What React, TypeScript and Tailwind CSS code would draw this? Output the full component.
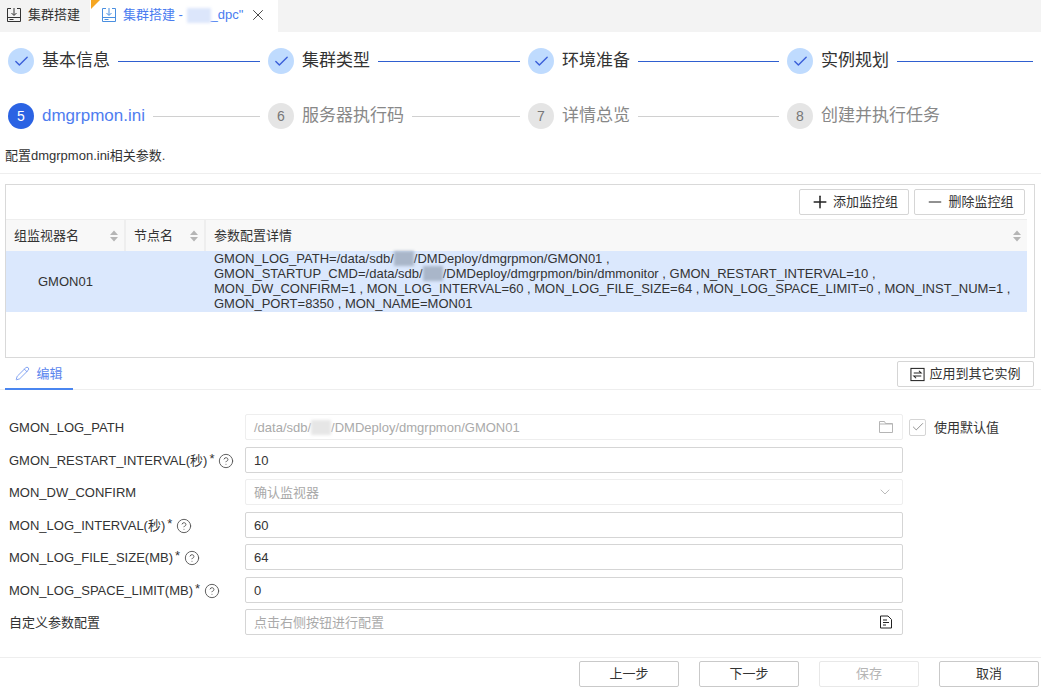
import React from "react";
import { Check, ChevronDown, Minus, Plus, X, Pencil, CircleHelp } from "lucide-react";

const topSteps = ["基本信息", "集群类型", "环境准备", "实例规划"];
const bottomSteps = ["服务器执行码", "详情总览", "创建并执行任务"];

const DownloadIcon = ({ className }: { className: string }) => (
  <svg viewBox="0 0 16 16" width="16" height="16" fill="none" stroke="currentColor" strokeWidth="1" className={className}>
    <path d="M5 1.5H1.5v13h13v-13H11" />
    <path d="M8 1v7M5.5 6 8 8.5 10.5 6" />
    <path d="M1.5 10.5h13M3.5 12.5h4" />
  </svg>
);

const Sorter = () => (
  <svg viewBox="0 0 8 12" width="8" height="12" className="text-[#b5b5b5] shrink-0">
    <path d="M4 0.5 8 5H0Z M4 11.5 0 7h8Z" fill="currentColor" />
  </svg>
);

const Hidden = ({ w, tone }: { w: string; tone: string }) => (
  <span className={`inline-block h-[15px] align-[-3px] blur-[1.5px] ${w} ${tone}`} />
);

const Help = () => <CircleHelp size={16} strokeWidth={1.4} className="text-[#555] shrink-0" />;

function FormRow({ label, star, children }: { label: string; star?: boolean; children: React.ReactNode }) {
  return (
    <div className="flex h-[26px] items-center">
      <div className="flex w-[245px] shrink-0 items-center pl-[9px] pt-[2px] text-[13px] text-[#333]">
        <span>{label}</span>
        {star && <span className="ml-[2px] mr-[4px] -mt-1">*</span>}
        {star && <Help />}
      </div>
      {children}
    </div>
  );
}

const boxClass = "flex h-[26px] w-[658px] shrink-0 items-center justify-between rounded-[2px] border pl-[8px] pr-[9px] pt-[2px] text-[13px]";

function ActionButton({ label, disabled }: { label: string; disabled?: boolean }) {
  return (
    <button
      className={`h-[26px] w-[100px] rounded-[2px] border text-[13px] ${
        disabled ? "border-[#e8e8e8] text-[#b5b5b5]" : "border-[#c9c9c9] text-[#333]"
      }`}
    >
      {label}
    </button>
  );
}

export default function App() {
  return (
    <div className="h-[692px] w-[1041px] overflow-hidden bg-white font-['Liberation_Sans','Noto_Sans_CJK_SC',sans-serif] text-[#333]">
      <div className="flex h-8 bg-[#f3f3f3] text-[13px]">
        <div className="flex w-[90px] items-center gap-[6px] pl-[6px] pb-[2px]">
          <DownloadIcon className="text-[#333]" />
          <span>集群搭建</span>
        </div>
        <div className="relative flex w-[188px] items-center bg-white pl-[11px] pb-[2px] text-[#4a7cf0]">
          <div className="absolute left-[1px] top-0 border-r-[9px] border-t-[9px] border-r-transparent border-t-[#f5a623]" />
          <DownloadIcon className="text-[#4a8fe0]" />
          <span className="ml-[6px] whitespace-pre">集群搭建 - </span>
          <Hidden w="w-[24px]" tone="bg-[#dce6fb]" />
          <span>_dpc"</span>
          <X size={18} strokeWidth={1.3} className="ml-[6px] text-[#444]" />
        </div>
      </div>

      <div className="grid h-[42px] grid-cols-[260px_260px_259px_246px] items-end pl-2">
        {topSteps.map((s, i) => (
          <div key={s} className="flex h-[26px] items-center">
            <div className="flex size-[26px] shrink-0 items-center justify-center rounded-full bg-[#bfdbfe]">
              <Check size={17} strokeWidth={2} className="text-[#3b5fd9]" />
            </div>
            <span className="ml-2 text-[17px] text-[#333]">{s}</span>
            <div className={`ml-2 h-px flex-1 bg-[#2f5fd0] ${i === 3 ? "" : "mr-2"}`} />
          </div>
        ))}
      </div>

      <div className="mt-[29px] grid h-[26px] grid-cols-[260px_260px_259px_246px] pl-2">
        <div className="flex items-center">
          <div className="flex size-[26px] shrink-0 items-center justify-center rounded-full bg-[#2b63e3] text-[14px] text-white">5</div>
          <span className="ml-2 text-[17px] text-[#4f7df0]">dmgrpmon.ini</span>
          <div className="ml-2 mr-2 h-px flex-1 bg-[#d0d0d0]" />
        </div>
        {bottomSteps.map((s, i) => (
          <div key={s} className="flex items-center">
            <div className="flex size-[26px] shrink-0 items-center justify-center rounded-full bg-[#e5e5e5] text-[14px] text-[#777]">{i + 6}</div>
            <span className="ml-2 text-[17px] text-[#888]">{s}</span>
            <div className={`ml-2 mr-2 h-px flex-1 ${i === 2 ? "" : "bg-[#d0d0d0]"}`} />
          </div>
        ))}
      </div>

      <div className="mt-[18px] h-[27px] border-b border-[#eeeeee] pl-[5px] text-[13px] leading-[17px] text-[#333]">配置dmgrpmon.ini相关参数.</div>

      <div className="ml-[5px] mt-[10px] h-[174px] w-[1030px] border border-[#d9d9d9]">
        <div className="flex h-[34px] items-center justify-end gap-[5px] pr-[9px]">
          <button className="flex h-[26px] w-[110px] items-center justify-center gap-[3px] rounded-[2px] border border-[#d5d5d5] text-[13px]">
            <Plus size={20} strokeWidth={1.8} className="text-[#222]" />
            添加监控组
          </button>
          <button className="flex h-[26px] w-[111px] items-center justify-center gap-[3px] rounded-[2px] border border-[#d5d5d5] text-[13px]">
            <Minus size={20} strokeWidth={1.2} className="text-[#222]" />
            删除监控组
          </button>
        </div>
        <div className="grid h-[32px] w-[1021px] grid-cols-[120px_80px_821px] border-t border-[#eeeeee] bg-[#f8f8f8] text-[13px]">
          <div className="flex items-center justify-between border-r-2 border-[#eeeeee] pl-[8px] pr-[6px]">组监视器名<Sorter /></div>
          <div className="flex items-center justify-between border-r-2 border-[#eeeeee] pl-[8px] pr-[6px]">节点名<Sorter /></div>
          <div className="flex items-center justify-between pl-[8px] pr-[6px]">参数配置详情<Sorter /></div>
        </div>
        <div className="grid h-[61px] w-[1021px] grid-cols-[200px_821px] bg-[#dbe8fd] text-[13px]">
          <div className="flex items-center pl-[32px]">GMON01</div>
          <div className="pl-[8px] leading-[15px]">
            <div>GMON_LOG_PATH=/data/sdb/<Hidden w="w-[20px]" tone="bg-[#a9b6c9]" />/DMDeploy/dmgrpmon/GMON01 ,</div>
            <div>GMON_STARTUP_CMD=/data/sdb/<Hidden w="w-[20px]" tone="bg-[#a9b6c9]" />/DMDeploy/dmgrpmon/bin/dmmonitor , GMON_RESTART_INTERVAL=10 ,</div>
            <div>MON_DW_CONFIRM=1 , MON_LOG_INTERVAL=60 , MON_LOG_FILE_SIZE=64 , MON_LOG_SPACE_LIMIT=0 , MON_INST_NUM=1 ,</div>
            <div>GMON_PORT=8350 , MON_NAME=MON01</div>
          </div>
        </div>
      </div>

      <div className="flex h-[32px] items-start justify-between border-b border-[#eeeeee] px-[5px] pt-[3px]">
        <div className="-mb-px flex h-[29px] w-[68px] items-center justify-center gap-[6px] border-b-2 border-[#4a86f0] pb-[2px] text-[13px] text-[#5b85ee]">
          <Pencil size={15} strokeWidth={1.2} />
          编辑
        </div>
        <button className="mr-[2px] flex h-[26px] w-[137px] items-center justify-center gap-[4px] rounded-[2px] border border-[#d5d5d5] text-[13px]">
          <svg viewBox="0 0 16 16" width="15" height="15" fill="none" stroke="#222" strokeWidth="1.1">
            <rect x="1" y="1.5" width="14" height="13" />
            <path d="M4 6.5h8L9.5 4M12 9.5H4L6.5 12" />
          </svg>
          应用到其它实例
        </button>
      </div>

      <div className="mt-[24px] flex flex-col gap-[6.5px]">
        <FormRow label="GMON_LOG_PATH">
          <div className={`${boxClass} border-[#eeeeee] text-[#aaa]`}>
            <span>/data/sdb/<Hidden w="w-[20px]" tone="bg-[#e6e6e6]" />/DMDeploy/dmgrpmon/GMON01</span>
            <svg viewBox="0 0 14 12" width="14" height="12" fill="none" stroke="#b5b5b5" strokeWidth="1" className="-mt-[2px]">
              <path d="M.5.5h5l1 2h7v9H.5Z" />
              <path d="M.5 3h13" />
            </svg>
          </div>
          <div className="ml-[6px] flex size-[17px] items-center justify-center rounded-[2px] border border-[#d5d5d5]">
            <Check size={14} strokeWidth={1.2} className="text-[#666]" />
          </div>
          <span className="ml-2 pt-[2px] text-[13px]">使用默认值</span>
        </FormRow>
        <FormRow label="GMON_RESTART_INTERVAL(秒)" star>
          <div className={`${boxClass} border-[#d5d5d5]`}>10</div>
        </FormRow>
        <FormRow label="MON_DW_CONFIRM">
          <div className={`${boxClass} border-[#eeeeee] text-[#aaa]`}>
            确认监视器
            <ChevronDown size={16} strokeWidth={1} className="-mt-[2px] text-[#999]" />
          </div>
        </FormRow>
        <FormRow label="MON_LOG_INTERVAL(秒)" star>
          <div className={`${boxClass} border-[#d5d5d5]`}>60</div>
        </FormRow>
        <FormRow label="MON_LOG_FILE_SIZE(MB)" star>
          <div className={`${boxClass} border-[#d5d5d5]`}>64</div>
        </FormRow>
        <FormRow label="MON_LOG_SPACE_LIMIT(MB)" star>
          <div className={`${boxClass} border-[#d5d5d5]`}>0</div>
        </FormRow>
        <FormRow label="自定义参数配置">
          <div className={`${boxClass} border-[#d5d5d5] text-[#aaa]`}>
            点击右侧按钮进行配置
            <svg viewBox="0 0 14 14" width="14" height="14" fill="none" stroke="#222" strokeWidth="1" className="-mt-[2px]">
              <path d="M1.5 1h7.5l3.5 3.5v8.5h-11Z" />
              <path d="M4 5h4M4 7.5h6M4 10h3" />
            </svg>
          </div>
        </FormRow>
      </div>

      <div className="mt-[22px] flex justify-end gap-5 border-t border-[#eeeeee] pr-[2px] pt-[3px]">
        <ActionButton label="上一步" />
        <ActionButton label="下一步" />
        <ActionButton label="保存" disabled />
        <ActionButton label="取消" />
      </div>
    </div>
  );
}
